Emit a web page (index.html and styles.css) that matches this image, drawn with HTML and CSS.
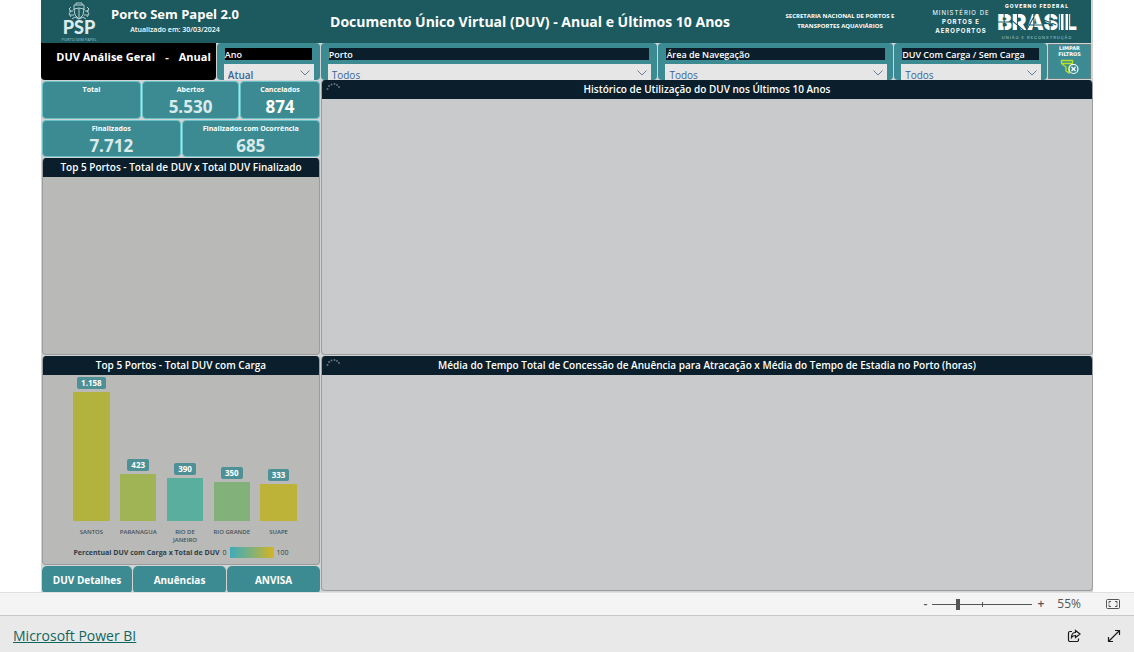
FILE: index.html
```html
<!DOCTYPE html>
<html lang="pt-BR">
<head>
<meta charset="utf-8">
<meta name="viewport" content="width=device-width, initial-scale=1">
<title>Documento Único Virtual (DUV)</title>
<link rel="stylesheet" href="styles.css">
</head>
<body>
<main class="report">
  <header class="header">
    <div class="psp">
      <svg class="psp-ship" viewBox="0 0 24 18" width="24" height="18" fill="none" stroke="#b4cfd2" stroke-width="1">
        <path d="M9 3V1h6v2M7 8V3h10v5M7 7l5-1 5 1-1 6-4 4-4-4zM12 6v10"/>
        <path d="M4 5l-2 2 2 2-2 3 2 3M20 5l2 2-2 2 2 3-2 3M2 9h4M18 9h4M3 13h4M17 13h4M5 17l3-2 4 2 4-2 3 2"/>
      </svg>
      <span class="psp-name">PSP</span>
      <span class="psp-sub">PORTO SEM PAPEL</span>
    </div>
    <div class="product">
      <div class="product-name">Porto Sem Papel 2.0</div>
      <div class="product-date">Atualizado em: 30/03/2024</div>
    </div>
    <h1 class="title">Documento Único Virtual (DUV) - Anual e Últimos 10 Anos</h1>
    <div class="secretaria">SECRETARIA NACIONAL DE PORTOS E<br>TRANSPORTES AQUAVIÁRIOS</div>
    <div class="ministry"><span class="ministry-light">MINISTÉRIO DE</span><br>PORTOS E<br>AEROPORTOS</div>
    <div class="brasil">
      <span class="brasil-top">GOVERNO FEDERAL</span>
      <div class="brasil-mark">
        <span class="brasil-name">BRASIL</span>
        <svg class="brasil-lines" viewBox="0 0 78 20" preserveAspectRatio="none" fill="none" stroke="#1d5a60" stroke-width="1">
          <path d="M0 10h14M7 0v20M14 8l14 12M20 0v20M28 20L38 1M36 0v20M31 13h14M46 8l12 5M52 0v20M62 0v20M70 0v20"/>
        </svg>
      </div>
      <span class="brasil-sub">UNIÃO E RECONSTRUÇÃO</span>
    </div>
  </header>

  <section class="filters">
    <div class="page-name"><span>DUV Análise Geral</span><span>-</span><span>Anual</span></div>
    <div class="filter filter-year">
      <label for="ano">Ano</label>
      <div class="select-box"><select id="ano"><option>Atual</option></select><svg viewBox="0 0 10 6"><path d="M0.5 0.5L5 5 9.500 0.500"/></svg></div>
    </div>
    <div class="filter filter-port">
      <label for="porto">Porto</label>
      <div class="select-box"><select id="porto"><option>Todos</option></select><svg viewBox="0 0 10 6"><path d="M0.5 0.5L5 5 9.500 0.500"/></svg></div>
    </div>
    <div class="filter filter-area">
      <label for="area">Área de Navegação</label>
      <div class="select-box"><select id="area"><option>Todos</option></select><svg viewBox="0 0 10 6"><path d="M0.5 0.5L5 5 9.500 0.500"/></svg></div>
    </div>
    <div class="filter filter-load">
      <label for="carga">DUV Com Carga / Sem Carga</label>
      <div class="select-box"><select id="carga"><option>Todos</option></select><svg viewBox="0 0 10 6"><path d="M0.5 0.5L5 5 9.500 0.500"/></svg></div>
    </div>
    <button class="clear" type="button">
      <span>LIMPAR<br>FILTROS</span>
      <svg viewBox="0 0 20 16" width="20" height="16" fill="none">
        <path d="M1.500 1.500h11v3L9 8v6l-3-2V8L1.500 4.500zM1.500 4.500h11" stroke="#b9e02a" stroke-width="1.300"/>
        <circle cx="13.500" cy="10" r="4.500" fill="#3d8b92" stroke="#fff" stroke-width="1.200"/>
        <path d="M11.500 8l4 4M15.500 8l-4 4" stroke="#fff" stroke-width="1.200"/>
      </svg>
    </button>
  </section>

  <div class="board">
    <div class="left">
      <div class="cards cards-three">
        <div class="card"><span class="card-label">Total</span></div>
        <div class="card"><span class="card-label">Abertos</span><span class="card-value dim">5.530</span></div>
        <div class="card"><span class="card-label">Cancelados</span><span class="card-value">874</span></div>
      </div>
      <div class="cards cards-two">
        <div class="card"><span class="card-label">Finalizados</span><span class="card-value dim">7.712</span></div>
        <div class="card"><span class="card-label">Finalizados com Ocorrência</span><span class="card-value dim">685</span></div>
      </div>
      <section class="panel grey panel-top">
        <h2>Top 5 Portos - Total de DUV x Total DUV Finalizado</h2>
      </section>
      <section class="panel grey panel-chart">
        <h2>Top 5 Portos - Total DUV com Carga</h2>
        <div class="chart">
          <div class="col"><span class="badge">1.158</span><div class="bar" style="height:129px;background:#b2b23f"></div></div>
          <div class="col"><span class="badge">423</span><div class="bar" style="height:47px;background:#a0b456"></div></div>
          <div class="col"><span class="badge">390</span><div class="bar" style="height:43px;background:#5aae9d"></div></div>
          <div class="col"><span class="badge">350</span><div class="bar" style="height:39px;background:#82b179"></div></div>
          <div class="col"><span class="badge">333</span><div class="bar" style="height:37px;background:#bdb338"></div></div>
        </div>
        <div class="axis"><span>SANTOS</span><span>PARANAGUA</span><span>RIO DE<br>JANEIRO</span><span>RIO GRANDE</span><span>SUAPE</span></div>
        <div class="legend"><b>Percentual DUV com Carga x Total de DUV</b><span>0</span><i></i><span>100</span></div>
      </section>
      <nav class="tabs">
        <button type="button">DUV Detalhes</button>
        <button type="button">Anuências</button>
        <button type="button">ANVISA</button>
      </nav>
    </div>
    <div class="right">
      <section class="panel panel-history">
        <h2>Histórico de Utilização do DUV nos Últimos 10 Anos</h2>
        <svg class="spinner" viewBox="0 0 14 9" fill="#66727a"><circle cx="1.500" cy="7" r="1"/><circle cx="3" cy="4" r="1"/><circle cx="5.500" cy="2.500" r="1"/><circle cx="8.500" cy="2" r="1"/><circle cx="11" cy="3" r="1"/><circle cx="13" cy="5" r="1"/></svg>
      </section>
      <section class="panel panel-average">
        <h2>Média do Tempo Total de Concessão de Anuência para Atracação x Média do Tempo de Estadia no Porto (horas)</h2>
        <svg class="spinner" viewBox="0 0 14 9" fill="#66727a"><circle cx="1.500" cy="7" r="1"/><circle cx="3" cy="4" r="1"/><circle cx="5.500" cy="2.500" r="1"/><circle cx="8.500" cy="2" r="1"/><circle cx="11" cy="3" r="1"/><circle cx="13" cy="5" r="1"/></svg>
      </section>
    </div>
  </div>
</main>

<div class="zoombar">
  <button class="step" type="button" aria-label="Reduzir">-</button>
  <input class="zoom" type="range" min="0" max="200" value="48" aria-label="Zoom">
  <button class="step" type="button" aria-label="Ampliar">+</button>
  <span class="percent">55%</span>
  <button class="fit" type="button" aria-label="Ajustar à página">
    <svg viewBox="0 0 14 10" width="14" height="10" fill="none" stroke="#555" stroke-width="1"><rect x="0.500" y="0.500" width="13" height="9" rx="1"/><path d="M3 4.500v-2h2M9 2.500h2v2M3 5.500v2h2M9 7.500h2v-2"/></svg>
  </button>
</div>
<footer class="footer">
  <a href="#">Microsoft Power BI</a>
  <div class="actions">
    <button type="button" aria-label="Compartilhar">
      <svg viewBox="0 0 14 14" width="14" height="14" fill="none" stroke="#1a1a1a" stroke-width="1.200"><path d="M5 2.500H3a1.500 1.500 0 0 0-1.500 1.500v7A1.500 1.500 0 0 0 3 12.500h7a1.500 1.500 0 0 0 1.500-1.500V9.500"/><path d="M8.500 1.500L13 5 8.500 8.500V6.500C6.500 6.500 5.500 7 4.500 8.500 4.500 5.500 6 3.500 8.500 3.500z"/></svg>
    </button>
    <button type="button" aria-label="Tela inteira">
      <svg viewBox="0 0 14 14" width="14" height="14" fill="none" stroke="#1a1a1a" stroke-width="1.200"><path d="M1.500 12.500l11-11M8 1.500h4.500V6M1.500 8v4.500H6"/></svg>
    </button>
  </div>
</footer>
</body>
</html>
```
FILE: styles.css
```css
* { box-sizing: border-box; }

body {
  margin: 0;
  min-height: 100vh;
  display: flex;
  flex-direction: column;
  background: #fff;
  color: #fff;
  font-family: "Open Sans", "Noto Sans", sans-serif;
}

button, select { font: inherit; color: inherit; }
button { border: 0; padding: 0; background: none; cursor: pointer; }
h1, h2 { margin: 0; }

.report {
  flex: 1;
  margin: 0 41px;
  display: flex;
  flex-direction: column;
  background: #d2d3d4;
}

/* Header */
.header {
  height: 43px;
  margin-right: 2px;
  display: grid;
  grid-template-columns: 70px 128px minmax(0, 1fr) 110px 30px 72px 80px;
  grid-template-areas: "psp product title secretaria . ministry brasil";
  padding-right: 14px;
  align-items: center;
  background: #1d5a60;
}
.psp {
  grid-area: psp;
  display: flex;
  flex-direction: column;
  align-items: center;
  padding-left: 6px;
}
.psp-name { font: 900 18px/15px Lato, sans-serif; color: #dcebec; }
.psp-sub { margin-top: 2px; font-size: 4px; line-height: 5px; color: #9dc0c4; white-space: nowrap; }
.product { grid-area: product; text-align: center; white-space: nowrap; padding-bottom: 4px; }
.product-name { font-size: 13px; line-height: 20px; font-weight: 700; }
.product-date { font-size: 7px; line-height: 12px; font-weight: 600; }
.title {
  grid-area: title;
  padding-left: 36px;
  font-size: 14px;
  line-height: 20px;
  font-weight: 700;
  text-align: center;
  white-space: nowrap;
}
.secretaria {
  grid-area: secretaria;
  padding-bottom: 2px;
  font-size: 6px;
  line-height: 10px;
  font-weight: 700;
  text-align: center;
  white-space: nowrap;
}
.ministry {
  grid-area: ministry;
  font: 700 6px/9px Inter, sans-serif;
  text-align: center;
  letter-spacing: 1px;
  white-space: nowrap;
}
.ministry-light { font-weight: 400; }
.brasil {
  grid-area: brasil;
  display: flex;
  flex-direction: column;
  align-items: center;
  white-space: nowrap;
}
.brasil-top { font: 800 5px/6px Inter, sans-serif; letter-spacing: 1px; }
.brasil-mark { position: relative; }
.brasil-name { display: block; font: 900 22px/26px Inter, sans-serif; }
.brasil-lines { position: absolute; inset: 3px 0; width: 100%; height: 20px; }
.brasil-sub { font: 400 4px/6px Inter, sans-serif; letter-spacing: 1px; color: #a9cdd0; }

/* Filters */
.filters {
  height: 37px;
  display: grid;
  grid-template-columns: 175fr 103fr 337fr 235fr 153fr 45px;
  column-gap: 1px;
  overflow: hidden;
}
.page-name {
  display: flex;
  justify-content: flex-end;
  gap: 10px;
  padding: 4px 5px 0 0;
  background: #000;
  border-radius: 0 0 4px 4px;
  font-size: 11px;
  line-height: 20px;
  font-weight: 700;
  white-space: nowrap;
}
.filter {
  min-width: 0;
  height: 37px;
  padding: 5px 6px 0 7px;
  background: #3d8b92;
  border-radius: 4px;
  overflow: hidden;
}
.filter label {
  display: block;
  height: 12px;
  margin: 0 2px 4px 1px;
  background: #0a1f2b;
  font-size: 9px;
  line-height: 13px;
  font-weight: 600;
  white-space: nowrap;
}
.filter-year label { background: #000; }
.select-box { position: relative; background: #e6e6e6; }
.select-box select {
  display: block;
  width: 100%;
  height: 22px;
  padding: 0 4px;
  border: 0;
  appearance: none;
  background: transparent;
  color: #3a6596;
  font-size: 10px;
}
.filter-year select { font-weight: 600; }
.select-box svg {
  position: absolute;
  right: 4px;
  top: 6px;
  width: 10px;
  height: 6px;
  fill: none;
  stroke: #66809a;
  pointer-events: none;
}
.clear {
  height: 35px;
  margin: 1px 2px 0 0;
  background: #3d8b92;
  border: 1px solid #5f8285;
  display: flex;
  flex-direction: column;
  align-items: center;
  gap: 2px;
  font: 700 5px/6px "DejaVu Sans", sans-serif;
}

/* Board */
.board {
  flex: 1;
  display: grid;
  grid-template-columns: 279fr 773fr;
}
.left, .right { min-width: 0; display: flex; flex-direction: column; }
.left { padding: 1px 0 0 1px; gap: 1px; }
.right { gap: 1px; padding: 0 0 1px 1px; }

.cards { display: grid; gap: 1px; height: 38px; }
.cards-three { grid-template-columns: 99fr 97fr 80fr; }
.cards-two { grid-template-columns: 1fr 1fr; height: 37px; }
.card {
  background: #3d8b92;
  border: 1px solid #69c1c8;
  border-radius: 4px;
  display: flex;
  flex-direction: column;
  align-items: center;
  white-space: nowrap;
}
.card-label { font-size: 7px; line-height: 15px; font-weight: 700; }
.card-value { font-size: 17px; line-height: 19px; font-weight: 700; }
.dim { color: #d9eaeb; }

.panel {
  position: relative;
  background: #c9cacc;
  border: 1px solid #9b9c9d;
  border-top: 0;
  border-radius: 4px;
  overflow: hidden;
}
.grey { background: #b9b9b7; }
.panel h2 {
  height: 19px;
  background: #0a1f2b;
  font-size: 10px;
  line-height: 19px;
  font-weight: 600;
  text-align: center;
  white-space: nowrap;
}
.spinner { position: absolute; left: 4px; top: 2px; width: 14px; height: 9px; }
.panel-top { flex: 1; }
.panel-chart { height: 209px; }
.panel-history { flex: 275; }
.panel-average { flex: 235; }

/* Chart */
.chart, .axis {
  display: grid;
  grid-template-columns: repeat(5, 1fr);
  padding: 0 17px 0 25px;
}
.chart { height: 146px; align-items: end; }
.col { display: flex; flex-direction: column; align-items: center; gap: 3px; }
.bar { width: 78%; }
.badge {
  padding: 0 4px;
  background: #4d9096;
  border-radius: 2px;
  font-size: 8px;
  line-height: 12px;
  font-weight: 700;
}
.axis {
  height: 26px;
  padding-top: 7px;
  color: #44525a;
  font-size: 6px;
  line-height: 8px;
  font-weight: 600;
  text-align: center;
}
.legend {
  display: flex;
  align-items: center;
  justify-content: center;
  gap: 3px;
  color: #2c3f4b;
  font-size: 7px;
  line-height: 11px;
  white-space: nowrap;
}
.legend i { width: 44px; height: 11px; background: linear-gradient(90deg, #3fabb8, #82b179, #d6b422); }

.tabs { display: grid; grid-template-columns: 90fr 93fr 93fr; gap: 1px; height: 26px; }
.tabs button {
  background: #3d8b92;
  border-radius: 5px;
  font-size: 10px;
  line-height: 28px;
  font-weight: 700;
}

/* Zoom bar and footer */
.zoombar {
  height: 24px;
  padding-right: 14px;
  display: flex;
  align-items: center;
  justify-content: flex-end;
  gap: 5px;
  background: #f4f4f4;
  border-top: 1px solid #e0e0e0;
  border-bottom: 1px solid #c8c8c8;
  color: #555;
  font-size: 12px;
  line-height: 22px;
}
.step { font-weight: 600; }
.zoom {
  appearance: none;
  width: 100px;
  height: 12px;
  margin: 0;
  background:
    linear-gradient(#555, #555) center / 1px 5px no-repeat,
    linear-gradient(#555, #555) center / 100% 1px no-repeat;
}
.zoom::-webkit-slider-thumb { appearance: none; width: 4px; height: 11px; background: #555; }
.percent { margin: 0 20px 0 8px; }
.fit { display: flex; }
.footer {
  height: 36px;
  padding: 4px 13px 0;
  display: flex;
  align-items: center;
  justify-content: space-between;
  background: #e9e9e9;
}
.footer a { color: #11665f; font-size: 14px; line-height: 20px; }
.actions { display: flex; gap: 26px; }
.actions button { display: flex; }
```
